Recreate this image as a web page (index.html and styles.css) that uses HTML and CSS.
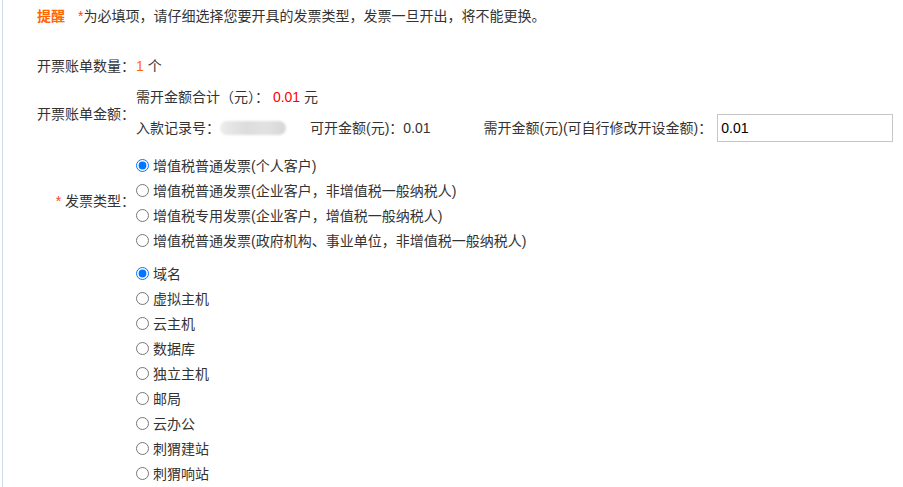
FILE: index.html
```html
<!DOCTYPE html>
<html lang="zh-CN">
<head>
<meta charset="utf-8">
<title>发票</title>
<link rel="stylesheet" href="styles.css">
</head>
<body>
<div class="page">
  <div class="tip"><b class="tip-title">提醒</b><span class="req">*</span>为必填项，请仔细选择您要开具的发票类型，发票一旦开出，将不能更换。</div>
  <div class="form">
    <div class="label">开票账单数量：</div>
    <div class="value row-count"><span class="num">1</span> 个</div>

    <div class="label">开票账单金额：</div>
    <div class="value row-amount">
      <div class="line">需开金额合计（元）： <span class="red">0.01</span> 元</div>
      <div class="line line2">
        <span>入款记录号：</span><span class="blur"></span><span class="avail">可开金额(元)：0.01</span><span>需开金额(元)(可自行修改开设金额)：</span><input class="amount-input" type="text" value="0.01">
      </div>
    </div>

    <div class="label"><span class="req">*</span> 发票类型：</div>
    <div class="value radios group1">
      <label class="radio"><input type="radio" name="type" checked>增值税普通发票(个人客户)</label>
      <label class="radio"><input type="radio" name="type">增值税普通发票(企业客户，非增值税一般纳税人)</label>
      <label class="radio"><input type="radio" name="type">增值税专用发票(企业客户，增值税一般纳税人)</label>
      <label class="radio"><input type="radio" name="type">增值税普通发票(政府机构、事业单位，非增值税一般纳税人)</label>
    </div>

    <div class="label"></div>
    <div class="value radios group2">
      <label class="radio"><input type="radio" name="prod" checked>域名</label>
      <label class="radio"><input type="radio" name="prod">虚拟主机</label>
      <label class="radio"><input type="radio" name="prod">云主机</label>
      <label class="radio"><input type="radio" name="prod">数据库</label>
      <label class="radio"><input type="radio" name="prod">独立主机</label>
      <label class="radio"><input type="radio" name="prod">邮局</label>
      <label class="radio"><input type="radio" name="prod">云办公</label>
      <label class="radio"><input type="radio" name="prod">刺猬建站</label>
      <label class="radio"><input type="radio" name="prod">刺猬响站</label>
    </div>
  </div>
</div>
</body>
</html>
```
FILE: styles.css
```css
html, body {
  margin: 0;
  padding: 0;
  background: #fff;
}
body {
  font-family: "Liberation Sans", "Noto Sans CJK SC", sans-serif;
  font-size: 14px;
  color: #333;
  overflow: hidden;
}
.page {
  margin-left: 2px;
  border-left: 1px solid #cfdcec;
  min-height: 487px;
  box-sizing: border-box;
}
.tip {
  padding: 4px 0 0 34px;
  line-height: 24px;
  height: 24px;
}
.tip-title {
  color: #ff6600;
  font-weight: bold;
  margin-right: 13px;
}
.req {
  color: #ff3c1e;
}
.form {
  margin-top: 26px;
  display: grid;
  grid-template-columns: 133px 1fr;
  align-items: center;
}
.label {
  text-align: right;
  padding-right: 1px;
  line-height: 24px;
  white-space: nowrap;
}
.value {
  line-height: 24px;
}
.row-count {
  height: 24px;
}
.num {
  color: #ff6a00;
}
.red {
  color: #ff0000;
}
.row-amount {
  padding: 7px 0 7px;
}
.line {
  height: 24px;
  white-space: nowrap;
}
.line2 {
  margin-top: 5px;
  height: 28px;
  display: flex;
  align-items: center;
}
.blur {
  display: inline-block;
  width: 66px;
  height: 14px;
  margin: 0 24px 0 0;
  border-radius: 7px;
  background: linear-gradient(to right, #ececec, #dcdcdc 40%, #e2e2e2 70%, #d6d6d6);
  filter: blur(1px);
}
.avail {
  margin-right: 53px;
}
.amount-input {
  margin-left: 5px;
  width: 176px;
  height: 28px;
  box-sizing: border-box;
  border: 1px solid #c6c6c6;
  padding: 0 3px;
  font-family: "Liberation Sans", sans-serif;
  font-size: 14px;
  color: #000;
  outline: none;
}
.radios {
  display: flex;
  flex-direction: column;
}
.group1 {
  padding-top: 4px;
}
.group2 {
  padding-top: 8px;
}
.radio {
  height: 25px;
  display: flex;
  align-items: center;
  white-space: nowrap;
}
.radio input {
  width: 13px;
  height: 13px;
  margin: 0 4px 0 0;
}
```
